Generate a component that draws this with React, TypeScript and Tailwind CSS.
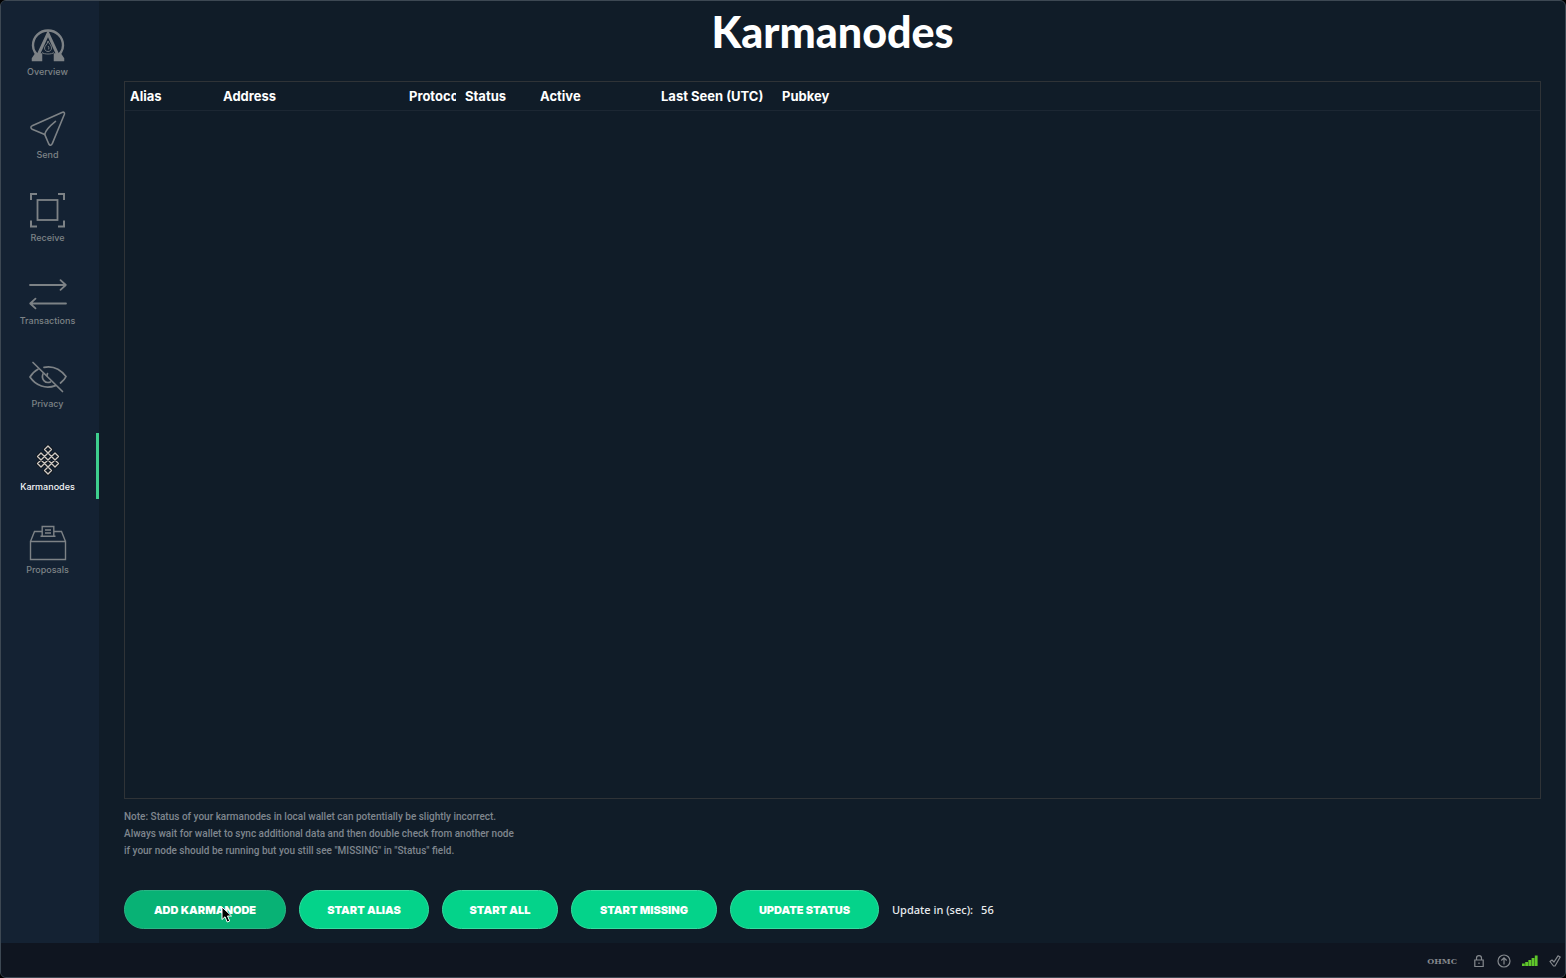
import type { ReactNode } from "react";
import { useState } from "react";
import clsx from "clsx";

function OverviewIcon() {
  return (
    <svg viewBox="0 0 40 40" className="h-10 w-10" fill="none" stroke="currentColor">
      <path d="M12.5 32.500C8 29.500 5 25.500 5 20.500C5 11.500 12 5.500 20 5.500S35 11.500 35 20.500C35 25.500 32 29.500 27.500 32.500" strokeWidth="2.400" />
      <path d="M8.500 33.500L20 8.500L31.500 33.500" strokeWidth="3" />
      <path d="M4.500 35.500V33.500L7.500 29H13.500V35.500ZM35.500 35.500V33.500L32.500 29H26.500V35.500Z" strokeWidth="1.500" fill="currentColor" />
      <path d="M20 16C21 19 23.500 20 23.500 23C23.500 25 22 26.500 20 26.500S16.500 25 16.500 23C16.500 21 19.500 19.500 20 16ZM20 21C21.500 22.500 21 24 20 24.500M14 27.500C16 29.500 24 29.500 26 27.500" strokeWidth="0.900" />
    </svg>
  );
}

function SendIcon() {
  return (
    <svg viewBox="0 0 40 40" className="h-10 w-10" fill="none" stroke="currentColor" strokeWidth="1.600" strokeLinecap="round" strokeLinejoin="round">
      <path d="M34.500 4.200C36 3.800 36.800 4.600 36.400 6.200L24.300 35.600C23.600 37.600 21.800 37.800 20.800 36L16.700 26.400L4.200 21.200C2.500 20.300 2.500 18.300 4.200 17.700Z" />
      <path d="M16.700 26.400C17.500 22.600 20.500 19 27.500 13.400" />
    </svg>
  );
}

function ReceiveIcon() {
  return (
    <svg viewBox="0 0 40 40" className="h-10 w-10" fill="none" stroke="currentColor">
      <rect x="9.500" y="9" width="20" height="20" strokeWidth="1.800" />
      <path d="M9 3H3V9M30 3H36V9M9 35.500H3V29.500M30 35.500H36V29.500" strokeWidth="2" />
    </svg>
  );
}

function TransactionsIcon() {
  return (
    <svg viewBox="0 0 40 40" className="h-10 w-10" fill="none" stroke="currentColor" strokeWidth="1.800" strokeLinecap="round" strokeLinejoin="round">
      <path d="M2 11H37.500M32.500 6.200L37.800 11L32.500 15.800M38 29.500H2.500M7.500 24.700L2.200 29.500L7.500 34.300" />
    </svg>
  );
}

function PrivacyIcon() {
  return (
    <svg viewBox="0 0 40 40" className="h-10 w-10" fill="none" stroke="currentColor" strokeWidth="1.700" strokeLinecap="round">
      <path d="M16 10.300C26 8.300 33 13 38 19.500C37 22 35 24 32.500 26M27.500 28.600C18 32.300 8 29 2 20C4 16.500 6.500 14 10 12.200" />
      <path d="M15 17C13 22 17 27 22.500 25" />
      <path d="M19.500 16.500L19 18.500" />
      <path d="M5 5.500L34.500 34.500" />
    </svg>
  );
}

// Endless knot drawn as a single closed strand
const KNOT =
  "M20 6L23.500 9.500L9.500 23.500L13 27L27 13L30.500 16.500L16.500 30.500L20 34L23.500 30.500L9.500 16.500L13 13L27 27L30.500 23.500L16.500 9.500Z";

function KarmanodesIcon() {
  return (
    <svg viewBox="0 0 40 40" className="h-10 w-10" fill="none" strokeLinejoin="round">
      <path d={KNOT} stroke="#0c1015" strokeWidth="3" />
      <path d={KNOT} stroke="#cfcac5" strokeWidth="1.400" />
    </svg>
  );
}

function ProposalsIcon() {
  return (
    <svg viewBox="0 0 40 40" className="h-10 w-10" fill="none" stroke="currentColor" strokeWidth="1.400">
      <path d="M2.500 18.500H37.500V36.500H2.500ZM2.500 18.500L6.500 8.500H14M26 8.500H33.500L37.500 18.500" />
      <path d="M12.500 13.200H27.500M14.200 13V3.500H25.800V13M17 7H23M17 10H23" />
    </svg>
  );
}

const NAV_ITEMS: { label: string; icon: ReactNode }[] = [
  { label: "Overview", icon: <OverviewIcon /> },
  { label: "Send", icon: <SendIcon /> },
  { label: "Receive", icon: <ReceiveIcon /> },
  { label: "Transactions", icon: <TransactionsIcon /> },
  { label: "Privacy", icon: <PrivacyIcon /> },
  { label: "Karmanodes", icon: <KarmanodesIcon /> },
  { label: "Proposals", icon: <ProposalsIcon /> },
];

const COLUMNS = [
  { label: "Alias", width: "w-[93px]" },
  { label: "Address", width: "w-[186px]" },
  { label: "Protocol", width: "w-[56px]" },
  { label: "Status", width: "w-[75px]" },
  { label: "Active", width: "w-[121px]" },
  { label: "Last Seen (UTC)", width: "w-[121px]" },
  { label: "Pubkey", width: "w-auto" },
];

const ACTIONS = [
  { label: "START ALIAS", width: "w-[130px]" },
  { label: "START ALL", width: "w-[116px]" },
  { label: "START MISSING", width: "w-[146px]" },
  { label: "UPDATE STATUS", width: "w-[149px]" },
];

const BUTTON =
  "h-[39px] rounded-full border text-center font-['Inter'] text-[11px] leading-4 font-black whitespace-nowrap text-white";

function Sidebar() {
  const [active, setActive] = useState("Karmanodes");

  return (
    <nav aria-label="Main" className="w-[98px] shrink-0 bg-[#142233] pt-[17px]">
      <ul className="flex flex-col gap-[17px]">
        {NAV_ITEMS.map((item) => (
          <li key={item.label}>
            <button
              type="button"
              onClick={() => setActive(item.label)}
              className={clsx(
                "flex h-[66px] w-full flex-col items-center border-r-[3px] pt-[7px] pr-0.5 font-['Inter'] text-[9px] leading-[14px] font-medium",
                active === item.label
                  ? "border-[#3ecf8e] text-[#f4f6f8]"
                  : "border-transparent text-[#7d8286]",
              )}
            >
              {item.icon}
              <span>{item.label}</span>
            </button>
          </li>
        ))}
      </ul>
    </nav>
  );
}

function NodeTable() {
  return (
    <div className="min-h-[240px] flex-1 border border-[#2f3337]">
      <table className="w-full table-fixed border-collapse">
        <thead>
          <tr className="h-7 border-b border-[#1c2733]">
            {COLUMNS.map((col) => (
              <th
                key={col.label}
                scope="col"
                className={clsx(
                  "py-0 pr-1 pl-[5px] text-left font-['Inter'] text-[13px] leading-5 font-bold text-white",
                  col.width,
                )}
              >
                <div className="overflow-hidden whitespace-nowrap">{col.label}</div>
              </th>
            ))}
          </tr>
        </thead>
        <tbody />
      </table>
    </div>
  );
}

function Actions() {
  return (
    <div className="mt-[31px] flex items-center gap-[13px]">
      <button type="button" className={clsx(BUTTON, "relative w-[162px] border-[#2bb585] bg-[#08b275]")}>
        ADD KARMANODE
        <svg viewBox="0 0 12 18" className="absolute top-[15px] left-[96px] h-[18px] w-3" aria-hidden="true">
          <path d="M1 1V13.500L4 10.800L6.200 16L8.700 15L6.500 10H10.500Z" fill="#000" stroke="#fff" strokeWidth="1" />
        </svg>
      </button>
      {ACTIONS.map((action) => (
        <button
          key={action.label}
          type="button"
          className={clsx(BUTTON, "border-[#35dda0] bg-[#04d38a]", action.width)}
        >
          {action.label}
        </button>
      ))}
      <p className="flex gap-2 font-['Noto_Sans'] text-[11px] leading-4 font-medium text-[#e8ebee]">
        <span>Update in (sec):</span>
        <span>56</span>
      </p>
    </div>
  );
}

function StatusBar() {
  return (
    <footer className="flex h-[34px] shrink-0 items-center justify-end bg-[#0f1520] pt-0.5 pr-1 text-[#85898e]">
      <span className="mr-4 font-['DejaVu_Serif'] text-[8px] leading-3 font-bold">OHMC</span>
      <svg viewBox="0 0 12 14" className="mr-3 h-3.5 w-3" fill="none" stroke="currentColor" strokeWidth="1.200">
        <path d="M3.500 6V4C3.500 0.800 8.500 0.800 8.500 4V6M1.800 6H10.200V12.500H1.800ZM6 8.500V10" />
      </svg>
      <svg viewBox="0 0 14 14" className="mr-[11px] h-3.5 w-3.5" fill="none" stroke="currentColor" strokeWidth="1.200">
        <circle cx="7" cy="7" r="6" />
        <path d="M7 10.500V4M4.300 6.500L7 3.800L9.700 6.500" />
      </svg>
      <svg viewBox="0 0 16 12" className="mr-[11px] h-3 w-4" fill="#5fc72a">
        <path d="M0 8.500H2.800V11H0ZM3.200 7H6V11H3.200ZM6.400 5H9.200V11H6.400ZM9.600 3H12.400V11H9.600ZM12.800 0.500H15.600V11H12.800Z" />
      </svg>
      <svg viewBox="0 0 12 14" className="h-3.5 w-3" fill="none" stroke="currentColor" strokeWidth="1.200" strokeLinejoin="round">
        <path d="M1 7.500L3 6L5 8L9 1.800L11.200 3L6 12H4.500Z" />
      </svg>
    </footer>
  );
}

export default function App() {
  return (
    <div className="min-h-screen bg-black">
      <div className="flex min-h-screen flex-col overflow-hidden rounded-md border border-[#3d4853] bg-[#101c28]">
        <div className="flex flex-1">
          <Sidebar />
          <main className="flex min-w-0 flex-1 flex-col pr-6 pb-3.5 pl-[25px]">
            <h1 className="flex h-20 items-start justify-center pt-[7px] font-['Lato'] text-[43px] leading-[48px] font-black text-white">
              Karmanodes
            </h1>
            <NodeTable />
            <p className="mt-[9px] font-['Roboto'] text-[10px] leading-[17px] font-medium text-[#7f868e]">
              Note: Status of your karmanodes in local wallet can potentially be slightly incorrect.
              <br />
              Always wait for wallet to sync additional data and then double check from another node
              <br />
              if your node should be running but you still see "MISSING" in "Status" field.
            </p>
            <Actions />
          </main>
        </div>
        <StatusBar />
      </div>
    </div>
  );
}
